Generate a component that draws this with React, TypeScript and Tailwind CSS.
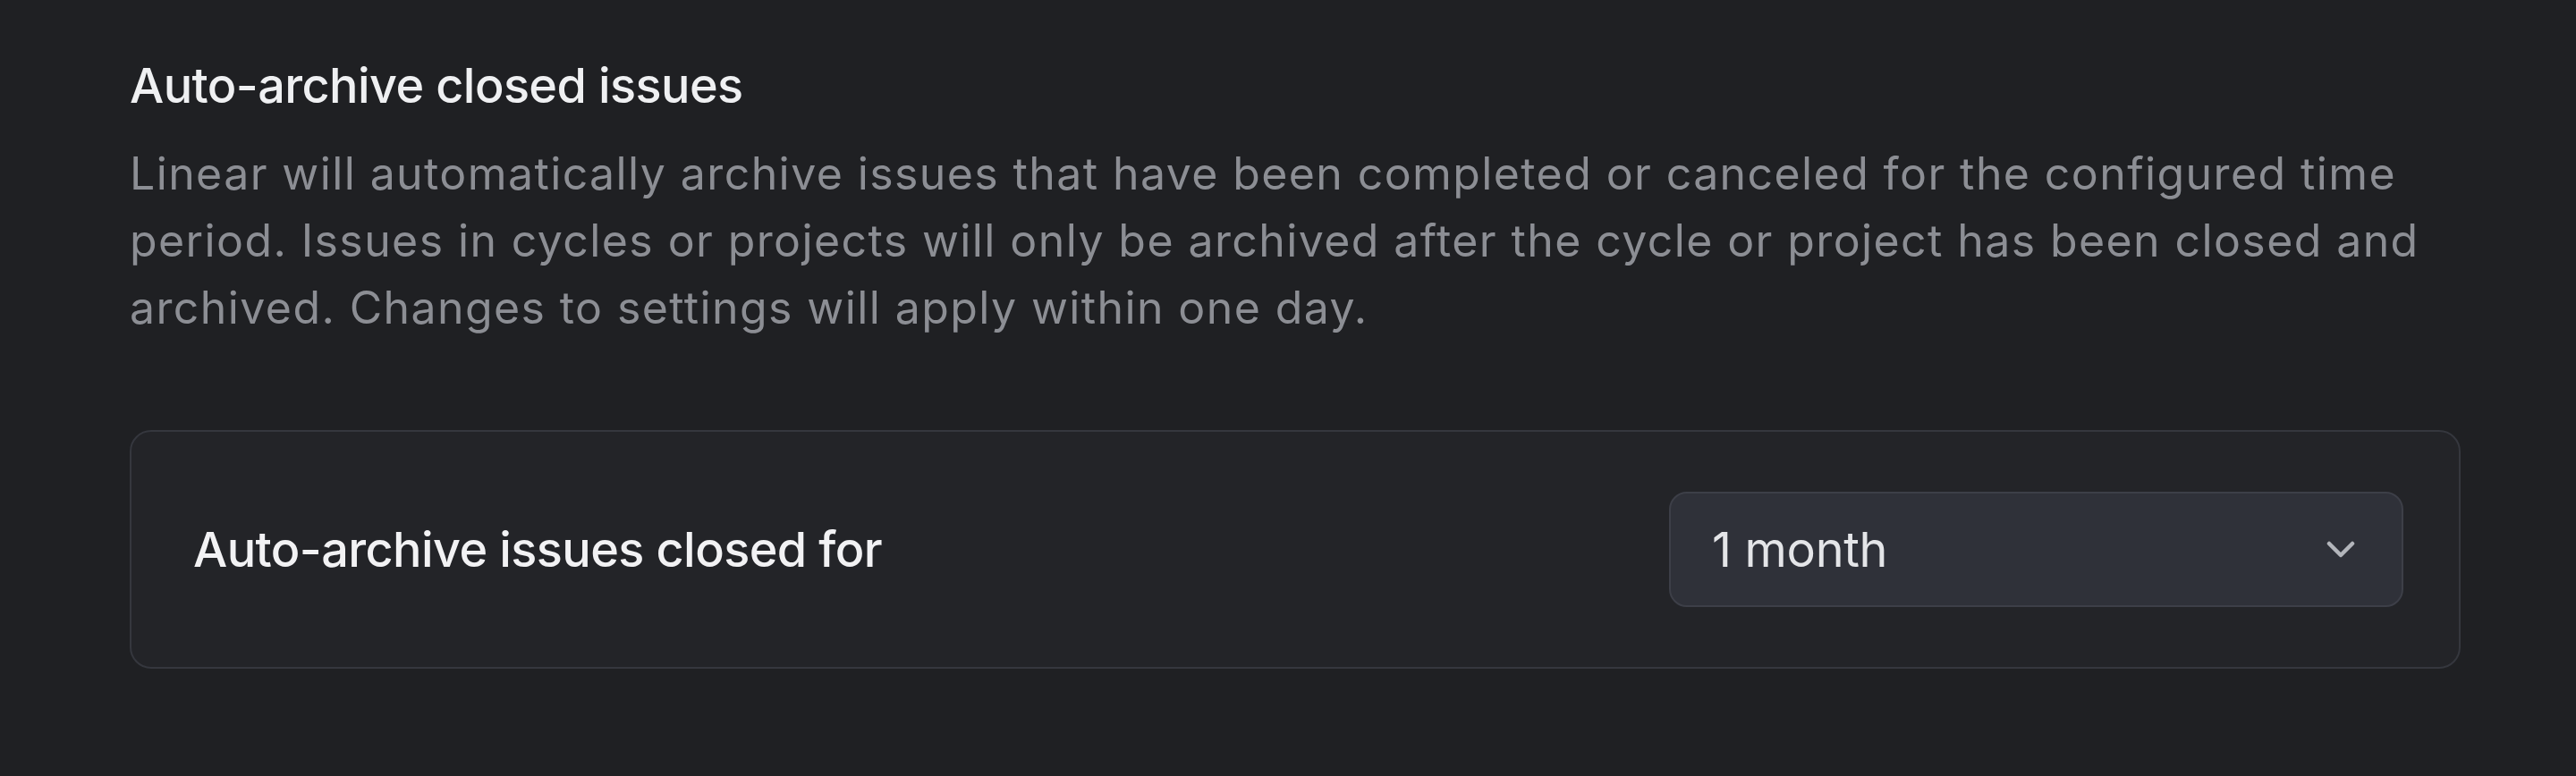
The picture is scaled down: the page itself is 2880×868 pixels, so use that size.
import React from "react";

export default function App() {
  return (
    <div className="w-full h-[868px] bg-[#1f2023] pl-[145px] pr-[129px] pt-[63px]" style={{ fontFamily: "Inter, 'Noto Sans', sans-serif" }}>
      <div className="text-[54px] leading-[65px] font-medium tracking-[-0.6px] text-[#eff0f2]">Auto-archive closed issues</div>
      <p className="mt-[29px] text-[50px] leading-[75px] tracking-[1.4px] text-[#8c8e94]">
        Linear will automatically archive issues that have been completed or canceled for the configured time period. Issues in cycles or projects will only be archived after the cycle or project has been closed and archived. Changes to settings will apply within one day.
      </p>
      <div className="mt-[99px] h-[267px] rounded-[24px] border-2 border-[#35373e] bg-[#232428] flex items-center justify-between pl-[69px] pr-[62px]">
        <span className="text-[54px] font-medium tracking-[-0.6px] text-[#f2f2f4]">Auto-archive issues closed for</span>
        <div className="w-[821px] h-[129px] rounded-[20px] border-2 border-[#3d3f48] bg-[#2f3139] flex items-center justify-between pl-[46px] pr-[52px]">
          <span className="text-[54px] tracking-[-0.3px] text-[#e4e5e8]">1 month</span>
          <svg width="32" height="20" viewBox="0 0 32 20" fill="none">
            <path d="M3 3 L16 16 L29 3" stroke="#b3b5bb" strokeWidth="4.5" strokeLinecap="round" strokeLinejoin="round" />
          </svg>
        </div>
      </div>
    </div>
  );
}
